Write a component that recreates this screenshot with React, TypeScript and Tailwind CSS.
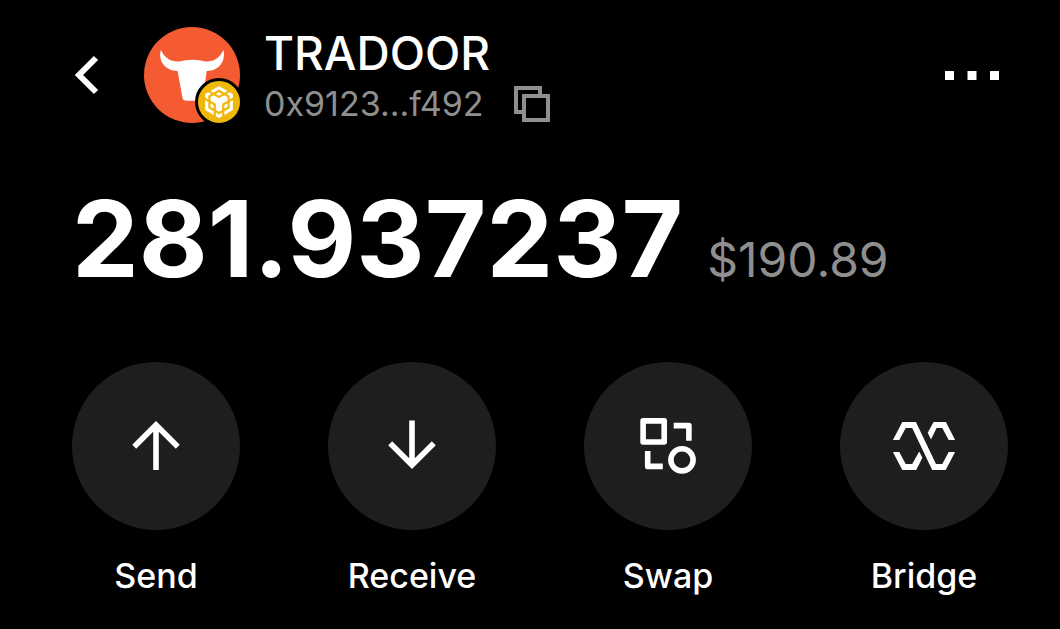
import type { ReactNode } from "react";
import { SiBnbchain } from "react-icons/si";

type Action = { label: string; icon: ReactNode };

const iconCls = "size-[72px]";

// Quick actions under the balance, in display order.
const ACTIONS: Action[] = [
  {
    label: "Send",
    icon: (
      <svg viewBox="0 0 72 72" fill="none" stroke="currentColor" strokeWidth="5.6" className={iconCls}>
        <path d="M36 60V15M14.2 36.8L36 15L57.8 36.8" />
      </svg>
    ),
  },
  {
    label: "Receive",
    icon: (
      <svg viewBox="0 0 72 72" fill="none" stroke="currentColor" strokeWidth="5.6" className={iconCls}>
        <path d="M36 10.5V55M14.2 33.2L36 55L57.8 33.2" />
      </svg>
    ),
  },
  {
    label: "Swap",
    icon: (
      <svg
        viewBox="0 0 72 72"
        fill="none"
        stroke="currentColor"
        strokeWidth="5.6"
        strokeLinejoin="round"
        className={iconCls}
      >
        <rect x="11.1" y="10.9" width="21.1" height="21.1" />
        <path d="M41.7 15.6H56.9V30.8M15.7 41V56.4H30.8" />
        <circle cx="50" cy="49.8" r="11.1" />
      </svg>
    ),
  },
  {
    label: "Bridge",
    icon: (
      <svg viewBox="0 0 72 72" fill="currentColor" className={iconCls}>
        <path d="M4.9 30L14.3 12H27.9L48 54H54.3L60.7 42H67.1L57.7 60H44.2L24.2 18H17.7L11.3 30Z" />
        <path d="M45.6 12H57.9L67.1 30H60.7L54.3 18H48.6L43 29.4L39.7 22.8Z" />
        <path d="M4.9 42H11.3L17.7 54H24.2L31.2 41.4L34.4 47.8L28.2 60H14.3Z" />
      </svg>
    ),
  },
];

function TokenLogo() {
  return (
    <div className="relative size-24 shrink-0">
      <svg viewBox="0 0 96 96" className="size-24">
        <circle cx="48" cy="48" r="48" fill="#f45b33" />
        <path
          d="M17 22.8C18.5 27 24 35.5 35 34.4Q48.3 31.2 61.6 34.4C72.5 35.5 77.8 27 79.3 22.8C82.3 34 75 44 62.7 44L58.7 71.5Q58.3 73.6 54 73.7H43Q39 73.6 38.6 71.5L33.6 44C21.5 44 13.5 34 17 22.8Z"
          fill="#fff"
        />
      </svg>
      <span className="absolute -right-[3px] -bottom-[3px] flex size-12 items-center justify-center rounded-full border-3 border-black bg-[#efb90b] text-white">
        <SiBnbchain size={32} />
      </span>
    </div>
  );
}

export default function App() {
  return (
    <main className="min-h-screen bg-black pb-8 font-['Inter',sans-serif] text-white">
      <header className="flex items-center pt-6 pr-[60px] pl-[72px]">
        <button type="button" aria-label="Back" className="flex w-[72px] shrink-0 pl-[3px]">
          <svg viewBox="0 0 24 40" fill="none" stroke="currentColor" strokeWidth="6" className="h-10 w-6">
            <path d="M21 3L4 20L21 37" />
          </svg>
        </button>
        <TokenLogo />
        <div className="ml-6">
          <h1 className="text-[46px] leading-[58px] font-medium">TRADOOR</h1>
          <div className="flex items-center gap-[30px] text-[#8f8f8f]">
            <span className="text-[34px] leading-[44px]">0x9123...f492</span>
            <button type="button" aria-label="Copy address">
              <svg viewBox="0 0 36 36" fill="none" stroke="currentColor" strokeWidth="4" className="size-9">
                <path d="M8 26H2V2H26V8" />
                <rect x="10" y="10" width="24" height="24" />
              </svg>
            </button>
          </div>
        </div>
        <button type="button" aria-label="More options" className="ml-auto">
          <svg viewBox="0 0 55 9" fill="currentColor" className="h-[9px] w-[55px]">
            <rect width="9" height="9" />
            <rect x="22.5" width="9" height="9" />
            <rect x="45" width="9" height="9" />
          </svg>
        </button>
      </header>

      <section className="mt-[53px] flex items-baseline gap-6 pl-[72px]">
        <p className="text-[106px] leading-[120px] font-bold">281.937237</p>
        <p className="text-[48px] leading-[58px] text-[#8f8f8f]">$190.89</p>
      </section>

      <nav className="mt-[63px] flex justify-between pr-[52px] pl-[72px]">
        {ACTIONS.map((action) => (
          <button key={action.label} type="button" className="flex w-[168px] flex-col items-center gap-6">
            <span className="flex size-[168px] items-center justify-center rounded-full bg-[#1e1e1e]">
              {action.icon}
            </span>
            <span className="text-[34px] leading-[44px] font-medium">{action.label}</span>
          </button>
        ))}
      </nav>
    </main>
  );
}
